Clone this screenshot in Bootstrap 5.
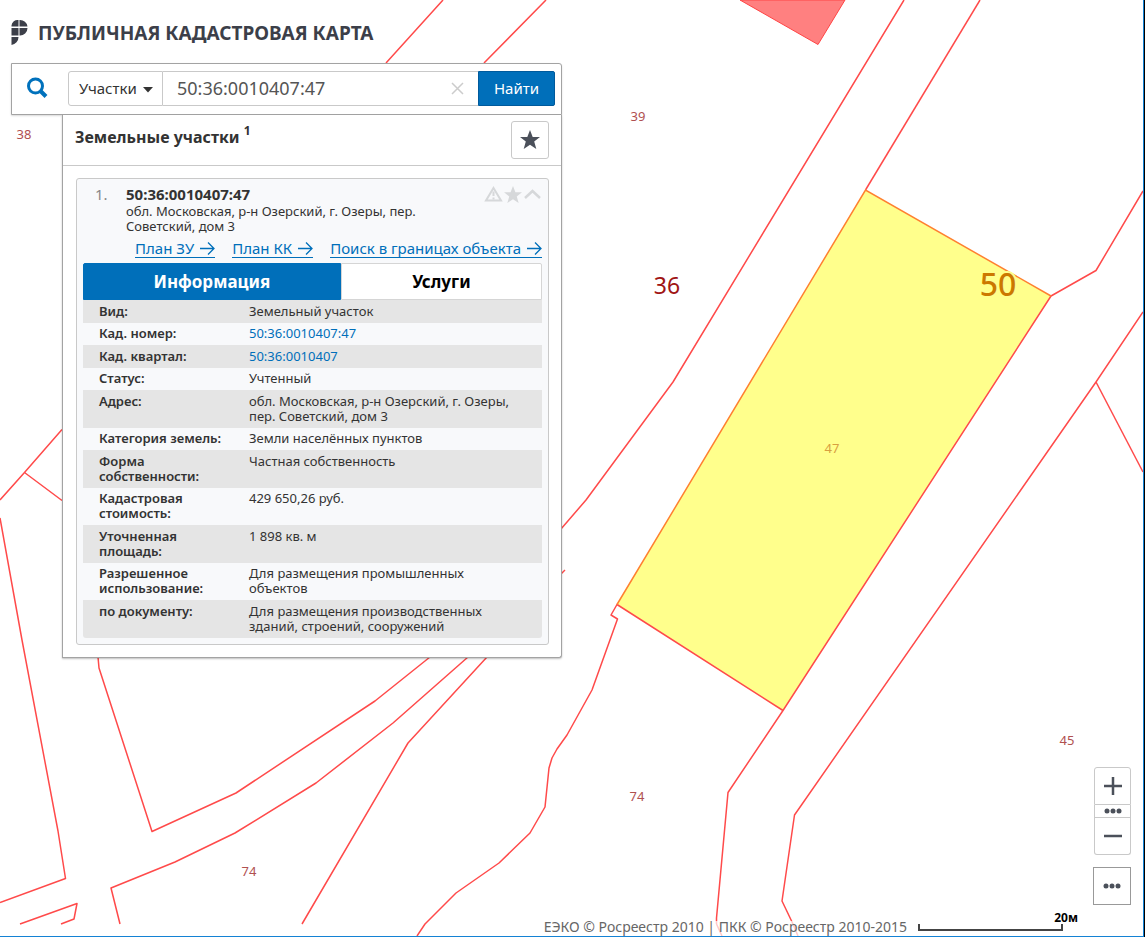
<!DOCTYPE html>
<html lang="ru">
<head>
<meta charset="utf-8">
<meta name="viewport" content="width=device-width, initial-scale=1">
<title>Публичная кадастровая карта</title>
<link href="https://cdn.jsdelivr.net/npm/bootstrap@5.3.0/dist/css/bootstrap.min.css" rel="stylesheet">
<style>
  :root { --pkk-blue: #006fba; --pkk-ink: #333; --pkk-icon: #4b505a; --pkk-line: #c9c9c9; --pkk-frame: #a3a3a3; }
  body { font-family: "Noto Sans", sans-serif; font-size: 13px; line-height: 15px; color: var(--pkk-ink); background: #fff; }
  a { color: var(--pkk-blue); }
  svg { display: block; }

  .viewport { border-right: 1px solid #1482d4; border-bottom: 1px solid #1482d4; box-shadow: 1px 0 0 #000; margin-right: 1px; }
  .map-canvas { inset: 0; z-index: 0; }
  .map-canvas text { fill: #b05050; font-size: 13px; text-anchor: middle; }
  .overlay { z-index: 1; padding: 17px 11px 0; }

  .brand { height: 33px; gap: 10px; margin-bottom: 13px; }
  .brand h1 { font-size: 19px; line-height: 24px; font-weight: 700; color: #3c3f49; }

  .sidebar { max-width: 551px; }
  .search { border: 1px solid var(--pkk-frame); height: 52px; padding: 0 6px 2px 14px; background: #fff; box-shadow: 0 1px 2px rgba(0,0,0,.15); border-top-right-radius: 3px; }
  .search-fields { height: 35px; margin-left: 20px; }
  .kind { width: 95px; border: 1px solid var(--pkk-line); border-radius: 3px 0 0 3px; padding: 0 0 0 10px; font-size: 15px; line-height: 20px; color: var(--pkk-ink); background: #fff; appearance: none; }
  .caret { right: 10px; top: 16px; width: 10px; height: 6px; pointer-events: none; }
  .query { border: 1px solid var(--pkk-line); border-width: 1px 0; padding: 0 40px 0 14px; font-size: 18px; line-height: 24px; color: #555; background: #fff; outline: 0; }
  .clear { right: 14px; top: 11px; }
  .find { width: 77px; padding: 0; border-radius: 0 2px 2px 0; font-size: 15px; line-height: 20px; color: #fff; background: var(--pkk-blue); border: 1px solid #005a9c; }

  .results { margin-left: 51px; border: 1px solid var(--pkk-frame); border-top: 0; border-radius: 0 0 3px 0; background: #fff; box-shadow: 0 1px 2px rgba(0,0,0,.25); }
  .results-head { padding: 6px 12px; border-bottom: 1px solid var(--pkk-line); height: 51px; }
  .results-head h2 { font-size: 16px; line-height: 20px; font-weight: 700; padding-top: 6px; }
  .results-head sup { font-size: 12px; top: -8px; }
  .fav { width: 38px; height: 38px; border: 1px solid var(--pkk-line); border-radius: 3px; background: #fff; }

  .parcel { margin: 12px 12px 12px 13px; padding: 5px 6px 6px; border: 1px solid var(--pkk-line); border-radius: 3px; background: #f8f9fb; }
  .parcel-top { padding-left: 12px; }
  .parcel-no { width: 31px; font-size: 15px; line-height: 20px; color: #888; }
  .parcel-top h3 { font-size: 15px; line-height: 20px; font-weight: 700; }
  .parcel-top address { max-width: 310px; }
  .tools { gap: 1px; padding-top: 2px; }
  .bare { border: 0; padding: 0; background: none; }
  .plans { font-size: 15px; line-height: 20px; margin: 5px 0 5px; gap: 17px; }
  .plans a { border-bottom: 1px solid var(--pkk-blue); height: 19px; gap: 6px; }

  .tabs { height: 37px; }
  .tabs button { font-size: 17px; line-height: 24px; font-weight: 700; color: #000; background: #fff; border: 1px solid #d5d5d5; border-radius: 0 2px 0 0; flex: 201 1 0; padding: 0; }
  .tabs button.current { color: #fff; background: var(--pkk-blue); border-color: var(--pkk-blue); border-radius: 2px 0 0 0; flex-grow: 258; }

  .facts { width: 100%; border-radius: 0 0 3px 3px; overflow: hidden; }
  .facts th, .facts td { vertical-align: top; padding: 3px 20px 4px 0; }
  .facts th { width: 166px; font-weight: 600; padding-left: 16px; }
  .facts tr:nth-child(odd) { background: #e5e5e5; }
  .facts tr:nth-child(odd) > * { padding-top: 4px; }
  .facts a { text-decoration: none; }

  .map-controls { z-index: 1; right: 12px; bottom: 31px; gap: 12px; }
  .ctl { width: 37px; background: #fff; border: 1px solid var(--pkk-line); padding: 0; color: var(--pkk-icon); display: flex; align-items: center; justify-content: center; }
  .ctl + .ctl { border-top: 0; }
  .in { height: 38px; border-radius: 3px 3px 0 0; }
  .steps { height: 13px; }
  .out { height: 37px; border-radius: 0 0 3px 3px; }
  .more { width: 38px; height: 38px; border-color: #999; }

  .map-foot { z-index: 1; right: 65px; bottom: 0; gap: 6px; }
  .credits { font-size: 14px; line-height: 12px; color: #666; background: rgba(255,255,255,.7); padding: 0 5px 3px; }
  .scale-text { font-size: 12px; line-height: 12px; font-weight: 700; color: #000; }
  .scale-bar { width: 145px; height: 7px; border: 2px solid #444; border-top: 0; margin: 0 15px 5px 0; }
</style>
</head>
<body>
<div class="viewport position-relative min-vh-100 overflow-hidden">

  <svg class="map-canvas position-absolute w-100 h-100" viewBox="0 0 1143 936" preserveAspectRatio="xMinYMin slice" role="img" aria-label="Карта участков">
    <path d="M740 0 818 44.500 845 0Z" fill="#ff8080" stroke="#f44" />
    <path d="M865.500 190 1051 296 783 710.500 617 604.500Z" fill="#ffff8c"/>
    <g fill="none" stroke="#ff4a4a" stroke-width="1.500" stroke-linejoin="round">
      <path d="M443 0 386 63M546 0 484 63"/>
      <path d="M904 0 673 382 586 500 561 529"/>
      <path d="M561 574 565 570"/>
      <path d="M980 0 865.500 190"/>
      <path d="M1143 191 1096 270.500 1051 296 783 710.500 728 792.500 716.500 918 716.500 924"/>
      <path d="M783 710.500 617 604.500 611 615 617.500 619 592 690 567 735 557 749 552 758 549 768 545 807 530 833 499 863 456 893 425 924 417 936"/>
      <path d="M1143 312 1096 382 794.500 815 782 901 793 924 798 936M716.500 924 722 936"/>
      <path d="M1096 382 1143 472"/>
      <path d="M62 429.500 24.500 472.500 0 500M24.500 472.500 62 500.500"/>
      <path d="M0 518 22 640 58 831 65.500 878.500 0 902.500"/>
      <path d="M98 657 99 668 152 831.500 236 793 375 701 430 657"/>
      <path d="M468 657 393 723 316 783 235 833 175 862 111 888 120 924"/>
      <path d="M487 657 408 743 302 924"/>
      <path d="M20 924 77 903.500 74 919 61 924"/>
    </g>
    <path d="M617 604.500 865.500 190 1051 296" fill="none" stroke="#ff8030" stroke-width="1.500"/>
    <text x="24" y="139">38</text>
    <text x="638" y="121">39</text>
    <text x="832" y="453" style="fill:#d8a040">47</text>
    <text x="1067" y="745">45</text>
    <text x="637" y="801">74</text>
    <text x="249" y="876">74</text>
    <text x="667" y="294" style="fill:#a01414;font-size:23px">36</text>
    <text x="998" y="296" style="fill:#cc7800;font-size:32px;stroke:#ffff8c;stroke-width:4px;paint-order:stroke;font-weight:500">50</text>
  </svg>

  <div class="overlay position-relative">
    <header class="brand d-flex">
      <svg width="17" height="28" viewBox="0 0 17 28" aria-hidden="true" fill="#3c3f49">
        <path d="M7.500 3v6.500H.5V8.500A6 6 0 0 1 7.500 3ZM8.500 3a7.500 7 0 0 1 8 6.500H8.500ZM.5 11h7v7.500H.5ZM8.500 11h8A7.500 7.500 0 0 1 8.500 18.500ZM.5 20h7A8 8 0 0 1 .5 28Z"/>
      </svg>
      <h1 class="m-0 mt-1">ПУБЛИЧНАЯ КАДАСТРОВАЯ КАРТА</h1>
    </header>

    <main class="sidebar">
      <form class="search d-flex align-items-center">
        <svg width="22" height="22" viewBox="0 0 22 22" fill="none" stroke="#0071bc" aria-hidden="true">
          <circle cx="9.500" cy="9" r="7" stroke-width="3"/><path d="M14.500 14 20 19.500" stroke-width="4"/>
        </svg>
        <div class="search-fields d-flex flex-grow-1">
          <div class="position-relative d-flex">
            <select class="kind" aria-label="Тип объекта"><option>Участки</option></select>
            <svg class="caret position-absolute" viewBox="0 0 10 6" aria-hidden="true"><path d="M0 0h10L5 5.500Z" fill="#333"/></svg>
          </div>
          <div class="position-relative d-flex flex-grow-1">
            <input class="query w-100" type="text" value="50:36:0010407:47" aria-label="Кадастровый номер">
            <button class="clear bare position-absolute" type="button" aria-label="Очистить">
              <svg width="13" height="13" viewBox="0 0 13 13" stroke="#ccc" stroke-width="1.500"><path d="M1 1 12 12M12 1 1 12"/></svg>
            </button>
          </div>
          <button class="find" type="submit">Найти</button>
        </div>
      </form>

      <section class="results">
        <div class="results-head d-flex justify-content-between">
          <h2 class="m-0">Земельные участки <sup>1</sup></h2>
          <button class="fav d-flex align-items-center justify-content-center p-0" type="button" aria-label="Избранное">
            <svg width="20" height="20" viewBox="0 0 20 20" fill="#4b505a"><path d="M10 0 12.700 7H20L14.200 11.600 16.300 19 10 14.700 3.700 19 5.800 11.600 0 7H7.300Z"/></svg>
          </button>
        </div>

        <article class="parcel">
          <div class="parcel-top d-flex">
            <div class="parcel-no">1.</div>
            <div class="flex-grow-1">
              <h3 class="m-0">50:36:0010407:47</h3>
              <address class="m-0">обл. Московская, р-н Озерский, г. Озеры, пер. Советский, дом 3</address>
            </div>
            <div class="tools d-flex align-items-start">
              <button class="bare" type="button" aria-label="Сообщить об ошибке">
                <svg width="19" height="16" viewBox="0 0 19 16" fill="none" stroke="#d6d8da" stroke-width="2"><path d="M9.500 2 17 14.500H2Z"/><path d="M9.500 5.500V10M9.500 11.500v2"/></svg>
              </button>
              <button class="bare" type="button" aria-label="В избранное">
                <svg width="18" height="17" viewBox="0 0 20 19" fill="#d6d8da"><path d="M10 0 12.700 7H20L14.200 11.600 16.300 19 10 14.700 3.700 19 5.800 11.600 0 7H7.300Z"/></svg>
              </button>
              <button class="bare" type="button" aria-label="Свернуть">
                <svg width="19" height="16" viewBox="0 0 19 16" fill="none" stroke="#d6d8da" stroke-width="2.500"><path d="M2 12 9.500 5 17 12"/></svg>
              </button>
            </div>
          </div>

          <nav class="plans d-flex justify-content-end">
            <a class="d-flex align-items-center text-decoration-none" href="#">План ЗУ
              <svg width="15" height="15" viewBox="0 0 15 15" fill="none" stroke="currentColor" stroke-width="1.300"><path d="M0 7.500H14M8 1.500 14 7.500 8 13.500"/></svg></a>
            <a class="d-flex align-items-center text-decoration-none" href="#">План КК
              <svg width="15" height="15" viewBox="0 0 15 15" fill="none" stroke="currentColor" stroke-width="1.300"><path d="M0 7.500H14M8 1.500 14 7.500 8 13.500"/></svg></a>
            <a class="d-flex align-items-center text-decoration-none" href="#">Поиск в границах объекта
              <svg width="15" height="15" viewBox="0 0 15 15" fill="none" stroke="currentColor" stroke-width="1.300"><path d="M0 7.500H14M8 1.500 14 7.500 8 13.500"/></svg></a>
          </nav>

          <div class="tabs d-flex" role="tablist">
            <button class="current" type="button" role="tab" aria-selected="true">Информация</button>
            <button type="button" role="tab" aria-selected="false">Услуги</button>
          </div>

          <table class="facts">
            <tbody>
              <tr><th scope="row">Вид:</th><td>Земельный участок</td></tr>
              <tr><th scope="row">Кад. номер:</th><td><a href="#">50:36:0010407:47</a></td></tr>
              <tr><th scope="row">Кад. квартал:</th><td><a href="#">50:36:0010407</a></td></tr>
              <tr><th scope="row">Статус:</th><td>Учтенный</td></tr>
              <tr><th scope="row">Адрес:</th><td>обл. Московская, р-н Озерский, г. Озеры, пер. Советский, дом 3</td></tr>
              <tr><th scope="row">Категория земель:</th><td>Земли населённых пунктов</td></tr>
              <tr><th scope="row">Форма собственности:</th><td>Частная собственность</td></tr>
              <tr><th scope="row">Кадастровая стоимость:</th><td>429 650,26 руб.</td></tr>
              <tr><th scope="row">Уточненная площадь:</th><td>1 898 кв. м</td></tr>
              <tr><th scope="row">Разрешенное использование:</th><td>Для размещения промышленных объектов</td></tr>
              <tr><th scope="row">по документу:</th><td>Для размещения производственных зданий, строений, сооружений</td></tr>
            </tbody>
          </table>
        </article>
      </section>
    </main>
  </div>

  <div class="map-controls position-absolute d-flex flex-column align-items-end">
    <div>
      <button class="ctl in" type="button" aria-label="Приблизить"><svg width="18" height="18" viewBox="0 0 18 18" stroke="currentColor" stroke-width="2.500"><path d="M9 0V18M0 9H18"/></svg></button>
      <button class="ctl steps" type="button" aria-label="Масштаб"><svg width="18" height="6" viewBox="0 0 18 6" fill="currentColor"><circle cx="3" cy="3" r="2.500"/><circle cx="9" cy="3" r="2.500"/><circle cx="15" cy="3" r="2.500"/></svg></button>
      <button class="ctl out" type="button" aria-label="Отдалить"><svg width="18" height="18" viewBox="0 0 18 18" stroke="currentColor" stroke-width="2.500"><path d="M0 9H18"/></svg></button>
    </div>
    <button class="ctl more" type="button" aria-label="Ещё"><svg width="18" height="6" viewBox="0 0 18 6" fill="currentColor"><circle cx="3" cy="3" r="2.500"/><circle cx="9" cy="3" r="2.500"/><circle cx="15" cy="3" r="2.500"/></svg></button>
  </div>

  <footer class="map-foot position-absolute d-flex align-items-end">
    <div class="credits">ЕЭКО © Росреестр 2010 | ПКК © Росреестр 2010-2015</div>
    <div>
      <div class="scale-text text-end">20м</div>
      <div class="scale-bar"></div>
    </div>
  </footer>
</div>
<script src="https://cdn.jsdelivr.net/npm/bootstrap@5.3.0/dist/js/bootstrap.bundle.min.js"></script>
</body>
</html>
